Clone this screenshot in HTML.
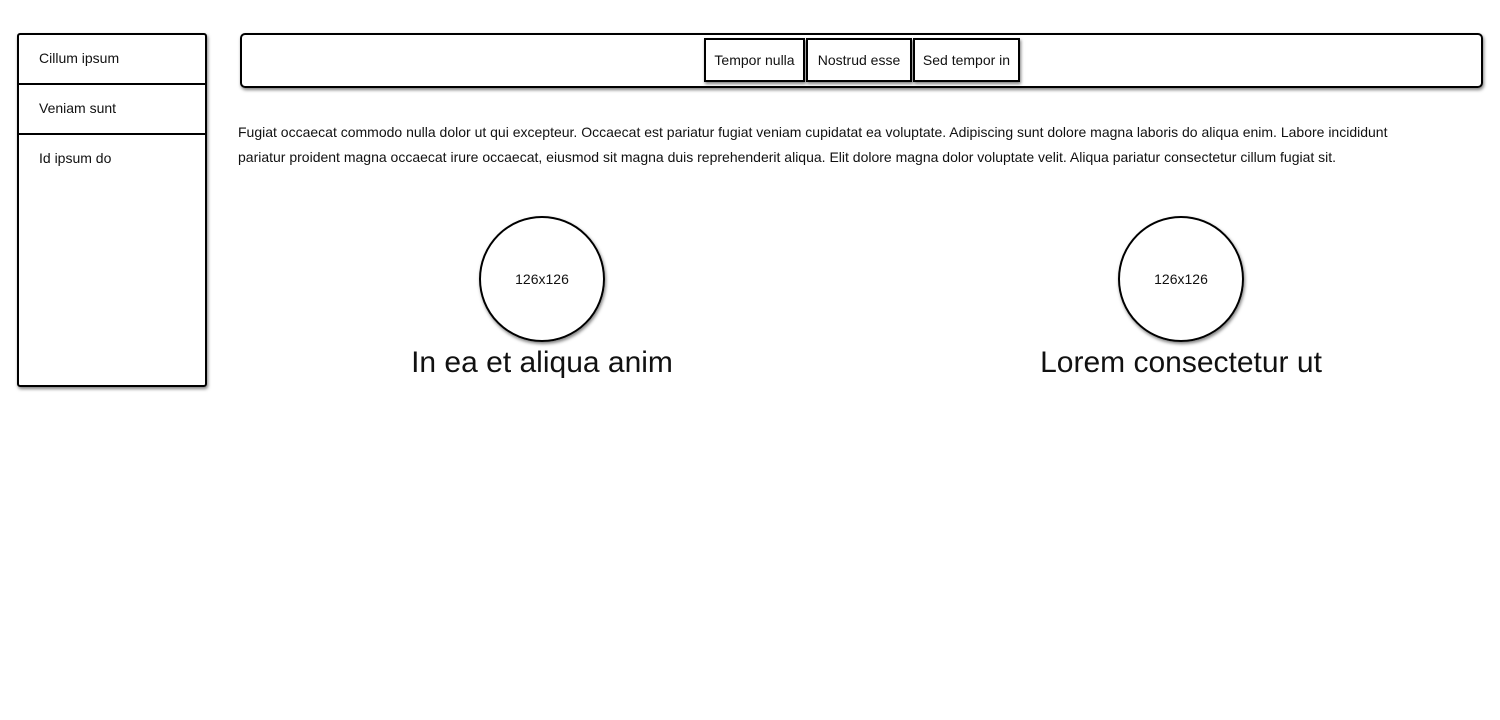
<!DOCTYPE html>
<html><head><style>
*{margin:0;padding:0;box-sizing:border-box}
body{width:1500px;height:720px;background:#fff;font-family:"Liberation Sans",sans-serif;color:#111;position:relative;overflow:hidden}
.side{position:absolute;left:17px;top:33px;width:190px;height:354px;border:2px solid #000;border-radius:3px;box-shadow:1px 2px 3px rgba(0,0,0,.5)}
.side div{height:50px;border-bottom:2px solid #000;padding-left:20px;line-height:46px;font-size:14px}
.side div:last-child{border:none}
.hdr{position:absolute;left:240px;top:33px;width:1243px;height:55px;border:2px solid #000;border-radius:5px;box-shadow:1px 2px 3px rgba(0,0,0,.5)}
.btn{position:absolute;top:38px;height:44px;border:2px solid #000;font-size:14px;line-height:40px;text-align:center;box-shadow:1px 2px 3px rgba(0,0,0,.5);background:#fff}
p{position:absolute;left:238px;top:120px;width:1200px;font-size:14px;line-height:25px}
.c{position:absolute;width:126px;height:126px;border:2px solid #000;border-radius:50%;top:216px;text-align:center;line-height:122px;font-size:14px;box-shadow:1px 2px 3px rgba(0,0,0,.5)}
h2{position:absolute;top:346px;font-weight:normal;font-size:30px;width:400px;text-align:center}
</style></head><body>
<div class="side"><div>Cillum ipsum</div><div>Veniam sunt</div><div>Id ipsum do</div></div>
<div class="hdr"></div>
<div class="btn" style="left:704px;width:101px">Tempor nulla</div>
<div class="btn" style="left:806px;width:106px">Nostrud esse</div>
<div class="btn" style="left:913px;width:107px">Sed tempor in</div>
<p>Fugiat occaecat commodo nulla dolor ut qui excepteur. Occaecat est pariatur fugiat veniam cupidatat ea voluptate. Adipiscing sunt dolore magna laboris do aliqua enim. Labore incididunt pariatur proident magna occaecat irure occaecat, eiusmod sit magna duis reprehenderit aliqua. Elit dolore magna dolor voluptate velit. Aliqua pariatur consectetur cillum fugiat sit.</p>
<div class="c" style="left:479px">126x126</div>
<div class="c" style="left:1118px">126x126</div>
<h2 style="left:342px">In ea et aliqua anim</h2>
<h2 style="left:981px">Lorem consectetur ut</h2>
</body></html>
